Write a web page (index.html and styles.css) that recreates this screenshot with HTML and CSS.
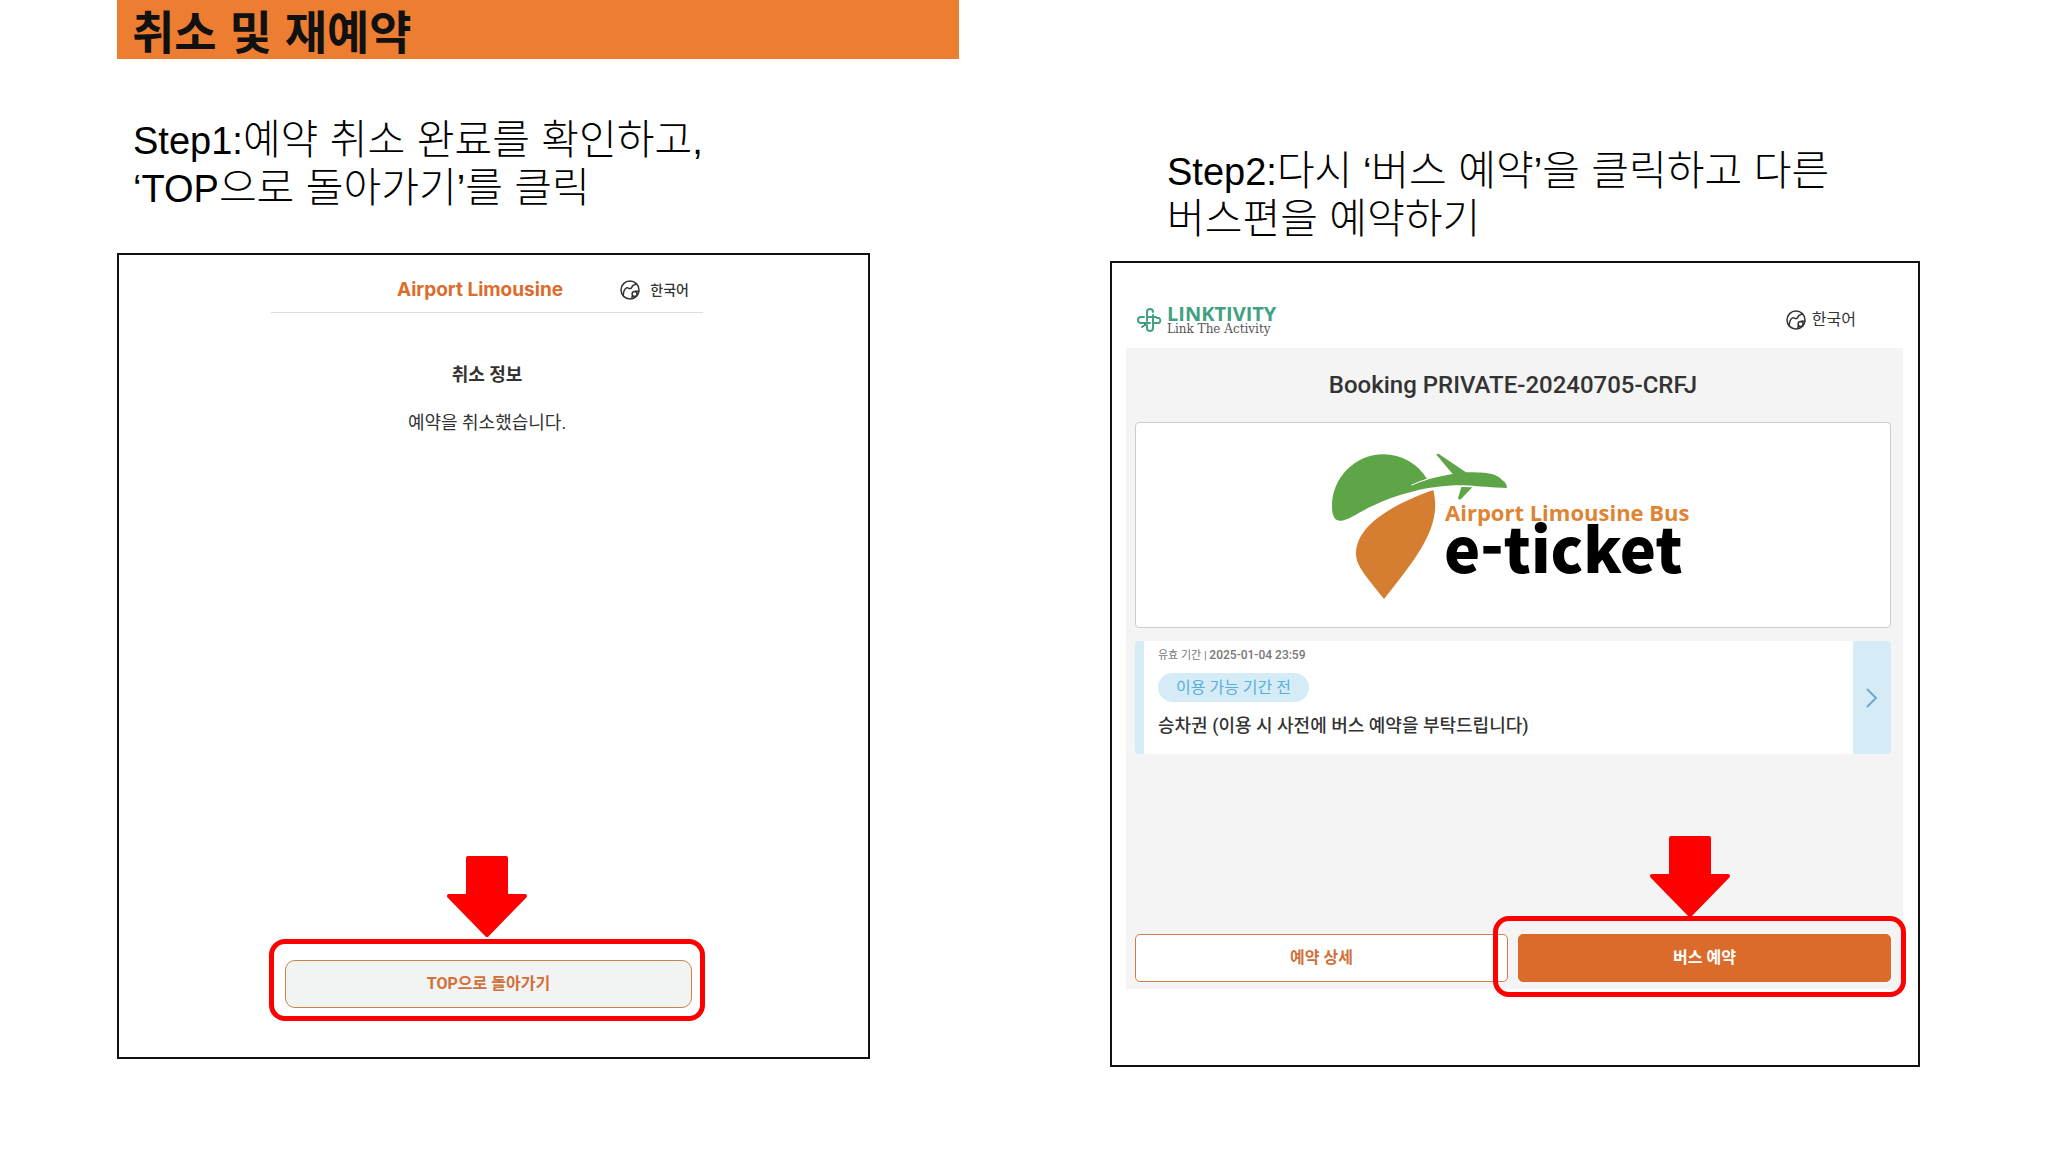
FILE: index.html
```html
<!DOCTYPE html>
<html lang="ko">
<head>
<meta charset="utf-8">
<title>취소 및 재예약</title>
<link rel="stylesheet" href="styles.css">
</head>
<body>
<svg class="defs" aria-hidden="true">
  <symbol id="globe" viewBox="0 0 20 20">
    <g fill="none" stroke="currentColor" stroke-width="1.5" stroke-linejoin="round" stroke-linecap="round">
      <circle cx="10" cy="10" r="9"/>
      <path d="M3.200 15.600C3.400 12 4.400 8.800 6.400 7.800C8 7 8.800 9 10.400 8.600C12.400 8 11.600 6 13.400 5.200C14.600 4.700 15.600 4.600 16 3.600"/>
      <path d="M18.800 11.400C17.400 10.800 16 10.800 15.200 11.600M12.400 18.400C11.600 17.600 11.800 16.600 12.800 16"/>
      <circle cx="14.600" cy="14" r="2.500"/>
    </g>
  </symbol>
  <symbol id="arrow" viewBox="0 0 82 82">
    <path d="M22 2H60V40H79L41 79L3 40H22Z" fill="#f00" stroke="#f00" stroke-width="4" stroke-linejoin="round"/>
  </symbol>
</svg>
<header class="banner"><h1>취소 및 재예약</h1></header>
<main class="steps">
  <section class="step step-cancel">
    <h2 class="caption">Step1:<span>예약 취소 완료를 확인하고</span>,<br>‘TOP<span>으로 돌아가기</span>’<span>를 클릭</span></h2>
    <div class="frame cancel-frame">
      <div class="cancel-bar">
        <strong class="brand">Airport Limousine</strong>
        <button class="lang lang-bold" type="button"><svg><use href="#globe"/></svg>한국어</button>
      </div>
      <h3 class="info-title">취소 정보</h3>
      <p class="info-text">예약을 취소했습니다.</p>
      <svg class="arrow arrow-flow" aria-hidden="true"><use href="#arrow"/></svg>
      <div class="highlight"><button class="btn btn-top" type="button">TOP으로 돌아가기</button></div>
    </div>
  </section>

  <section class="step step-rebook">
    <h2 class="caption">Step2:<span>다시</span> ‘<span>버스 예약</span>’<span>을 클릭하고 다른<br>버스편을 예약하기</span></h2>
    <div class="frame rebook-frame">
      <div class="rebook-bar">
        <a class="linktivity" href="#">
          <svg viewBox="0 0 26 26" aria-hidden="true">
            <g fill="none" stroke="#41a283" stroke-width="2" stroke-linecap="round">
              <path d="M10 14V5A3 3 0 0 1 13 2A3 3 0 0 1 16 5M16 8V21A3 3 0 0 1 10 21V18"/>
              <path d="M7 10H4A3 3 0 0 0 4 16H13M10 10H19M16 16H22A3 3 0 0 0 22 11H20"/>
              <path d="M8 16V18L5 20" stroke="#4b8a74"/>
            </g>
          </svg>
          <span class="linktivity-text"><b>LINKTIVITY</b><small>Link The Activity</small></span>
        </a>
        <button class="lang" type="button"><svg><use href="#globe"/></svg>한국어</button>
      </div>
      <div class="booking">
        <h3>Booking PRIVATE-20240705-CRFJ</h3>
        <div class="logo-card">
          <svg class="logo" viewBox="-2 0 430 190" role="img" aria-label="Airport Limousine Bus e-ticket">
            <g transform="scale(.3333)">
              <path fill="#5ea548" d="M340 163L381 146C352 100 304 73 251 73C165 73 96 143 96 229C96 258 104 272 121 272C145 272 168 251 215 229C290 193 390 164 490 166C540 168 580 174 620 174C623 165 615 155 606 150C590 132 568 127 498 127L422 76C417 70 409 70 410 75L458 132C415 139 376 148 340 163Z"/>
              <path fill="none" stroke="#fff" stroke-width="3" d="M334 166Q356 155 384 147"/>
              <path fill="#5ea548" d="M484 171L517 172L484 206Q478 212 474 205Z"/>
              <path fill="#d57e32" d="M400 180C424 280 370 361 252 507C190 430 168 405 168 370C170 290 265 228 400 180Z"/>
            </g>
            <text class="logo-top" x="145" y="91">Airport Limousine Bus</text>
            <text class="logo-main" x="144" y="143">e-ticket</text>
          </svg>
        </div>
        <a class="ticket" href="#">
          <div class="ticket-body">
            <span class="valid">유효 기간 | <b>2025-01-04 23:59</b></span>
            <span class="pill">이용 가능 기간 전</span>
            <span class="ticket-name">승차권 (이용 시 사전에 버스 예약을 부탁드립니다)</span>
          </div>
          <div class="ticket-go"><svg viewBox="0 0 12 20" aria-hidden="true"><path d="M1 1L10 10L1 19"/></svg></div>
        </a>
        <div class="actions">
          <button class="btn btn-outline" type="button">예약 상세</button>
          <div class="action-main">
            <button class="btn btn-solid" type="button">버스 예약</button>
            <svg class="arrow arrow-over" aria-hidden="true"><use href="#arrow"/></svg>
            <span class="ring"></span>
          </div>
        </div>
      </div>
    </div>
  </section>
</main>
</body>
</html>
```
FILE: styles.css
```css
* { box-sizing: border-box; }
body {
  margin: 0;
  background: #fff;
  color: #333;
  font-family: Roboto, "Noto Sans CJK KR", sans-serif;
}
h1, h2, h3, p { margin: 0; }
a { color: inherit; text-decoration: none; }
button { font: inherit; color: inherit; padding: 0; cursor: pointer; }
.defs { display: none; }

.banner {
  margin-left: 117px;
  max-width: 842px;
  height: 59px;
  padding-left: 15px;
  background: #ed7d31;
  color: #111;
}
.banner h1 {
  font: 700 46px/58px "Noto Sans CJK KR", sans-serif;
}

.steps {
  display: grid;
  grid-template-columns: 753fr 810fr;
  gap: 240px;
  padding: 0 128px 40px 117px;
}
.step-cancel { padding-top: 57px; }
.step-rebook { padding-top: 88px; }
.caption {
  font: 400 38px/46px "Liberation Sans", "Noto Sans CJK KR", sans-serif;
  color: #000;
  height: 92px;
}
.caption span {
  font-family: "Noto Sans CJK KR", sans-serif;
  font-size: 41px;
  font-weight: 300;
  line-height: 40px;
}
.step-cancel .caption { margin: 0 0 45px 16px; }
.step-rebook .caption { margin: 0 0 22px 57px; }

.frame {
  display: flex;
  flex-direction: column;
  min-height: 806px;
  border: 2px solid #111;
}
.cancel-frame { padding: 0 163px 36px 150px; }
.cancel-bar {
  display: grid;
  grid-template-columns: 1fr auto 1fr;
  align-items: center;
  height: 58px;
  margin: 0 2px;
  padding: 12px 14px 0 0;
  border-bottom: 1px solid #ddd;
}
.brand {
  grid-column: 2;
  font: 700 19px/24px Inter, sans-serif;
  color: #db6c2b;
}
.lang {
  display: flex;
  align-items: center;
  justify-self: end;
  gap: 6px;
  border: 0;
  background: none;
  font-size: 16px;
  line-height: 24px;
}
.lang svg { width: 20px; height: 20px; }
.lang-bold { gap: 10px; font-size: 14px; font-weight: 500; }
.info-title {
  margin-top: 48px;
  text-align: center;
  font-size: 18px;
  line-height: 28px;
  font-weight: 700;
}
.info-text {
  margin-top: 20px;
  text-align: center;
  font-size: 18px;
  line-height: 28px;
}
.arrow { width: 82px; height: 82px; }
.arrow-flow { margin: auto auto 1px; }
.highlight {
  padding: 16px 8px 8px 11px;
  border: 5px solid #f00;
  border-radius: 16px;
}
.btn {
  width: 100%;
  height: 48px;
  border: 1px solid #cf7f4c;
  border-radius: 5px;
  background: #fff;
  color: #d0703a;
  font-size: 16px;
  line-height: 24px;
  font-weight: 700;
}
.btn-top { display: block; border-radius: 10px; background: #f2f4f3; }

.rebook-frame { padding: 0 15px 76px 14px; }
.rebook-bar {
  display: flex;
  justify-content: space-between;
  align-items: center;
  height: 85px;
  padding: 28px 47px 0 11px;
}
.linktivity { display: flex; align-items: center; gap: 4px; }
.linktivity svg { width: 26px; height: 26px; }
.linktivity-text { display: flex; flex-direction: column; }
.linktivity b { font: 700 20px/19px "Open Sans", sans-serif; color: #41a283; }
.linktivity small { font: 400 12px/12px "DejaVu Serif", serif; color: #555; }

.booking {
  display: flex;
  flex-direction: column;
  flex: 1;
  padding: 22px 12px 7px 9px;
  background: #f4f4f4;
}
.booking h3 {
  font-size: 24px;
  line-height: 30px;
  font-weight: 500;
  text-align: center;
}
.logo-card {
  display: flex;
  justify-content: center;
  margin-top: 22px;
  padding: 7px 0;
  border: 1px solid #ccc;
  border-radius: 4px;
  background: #fff;
}
.logo { width: 430px; height: 190px; }
.logo-top { font: 700 22px "Open Sans", sans-serif; fill: #de8433; }
.logo-main { font: 900 61px "Noto Sans CJK KR", sans-serif; fill: #000; }

.ticket {
  display: flex;
  height: 113px;
  margin-top: 13px;
  border-left: 9px solid #d5ecf7;
  border-radius: 3px;
  background: #fff;
}
.ticket-body {
  display: flex;
  flex: 1;
  flex-direction: column;
  align-items: flex-start;
  padding: 6px 14px;
}
.valid { font-size: 11px; line-height: 17px; color: #777; }
.valid b { font-size: 12px; font-weight: 500; }
.pill {
  margin: 9px 0 10px;
  padding: 0 18px;
  border-radius: 15px;
  background: #d5ecf7;
  color: #5baedb;
  font-size: 16px;
  line-height: 29px;
}
.ticket-name { font-size: 18px; line-height: 28px; font-weight: 500; }
.ticket-go {
  display: flex;
  align-items: center;
  justify-content: center;
  width: 38px;
  border-radius: 0 3px 3px 0;
  background: #d5ecf7;
}
.ticket-go svg { width: 12px; height: 20px; fill: none; stroke: #6aa9cc; stroke-width: 2; }

.actions {
  display: grid;
  grid-template-columns: 1fr 1fr;
  gap: 10px;
  margin-top: auto;
}
.action-main { position: relative; }
.btn-solid { border-color: #db6b2b; background: #db6b2b; color: #fff; }
.ring {
  position: absolute;
  inset: -18px -15px -15px -25px;
  border: 5px solid #f00;
  border-radius: 16px;
  pointer-events: none;
}
.arrow-over { position: absolute; left: 131px; bottom: 64px; }
```
